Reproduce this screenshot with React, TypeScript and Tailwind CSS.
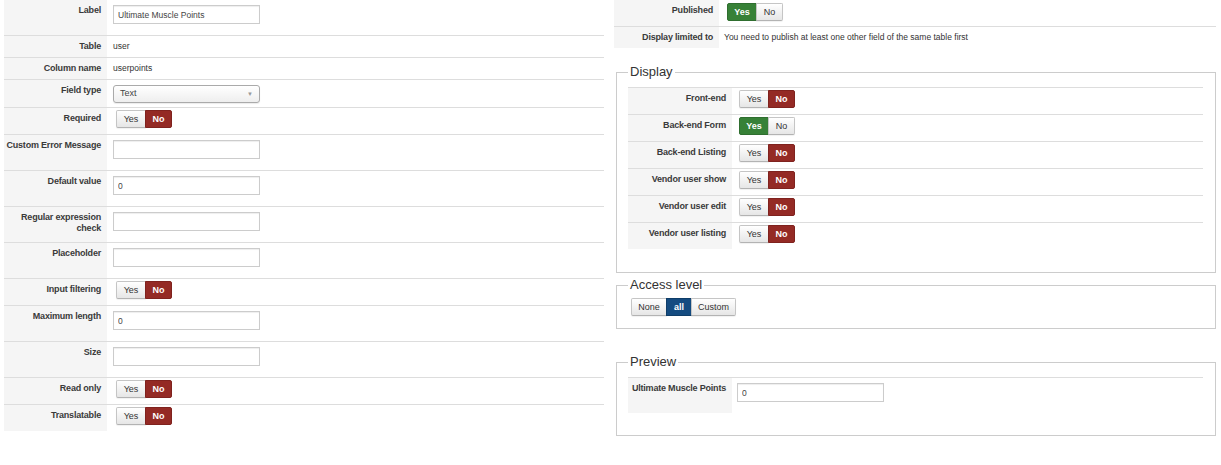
import React from 'react'

type YN = 'yes' | 'no'

const btnBase = 'flex h-[18px] items-center justify-center border text-[9px] leading-none'
const btnIdle =
  'border-[#c5c5c5] border-b-[#b3b3b3] bg-linear-to-b from-white to-[#e6e6e6] text-[#333] shadow-[0_1px_1px_rgba(0,0,0,0.06)]'
const btnRed = 'border-[#7f221e] bg-[#942a25] font-bold text-white'
const btnGreen = 'border-[#2f6e2f] bg-[#378137] font-bold text-white'
const btnBlue = 'border-[#0f3d68] bg-[#144b80] font-bold text-white'

function YesNo({ value, className = '' }: { value: YN; className?: string }) {
  return (
    <div className={`inline-flex ${className}`}>
      <span
        className={`${btnBase} w-[30px] rounded-l-[2px] ${value === 'yes' ? btnGreen : btnIdle}`}
      >
        Yes
      </span>
      <span
        className={`${btnBase} -ml-px w-[27px] rounded-r-[2px] ${value === 'no' ? btnRed : btnIdle}`}
      >
        No
      </span>
    </div>
  )
}

function TextInput({ value = '', width = 'w-[147px]' }: { value?: string; width?: string }) {
  return (
    <input
      readOnly
      value={value}
      className={`block h-[19px] ${width} border border-[#ccc] bg-white px-[4px] text-[8.5px] text-[#444] shadow-[inset_0_1px_1px_rgba(0,0,0,0.07)] outline-none`}
    />
  )
}

function FakeSelect({ value }: { value: string }) {
  return (
    <div className="flex h-[18px] w-[147px] items-center justify-between rounded-[3px] border border-[#aaa] bg-linear-to-b from-white to-[#eee] pl-[6px] pr-[6px] text-[9px] text-[#444] shadow-[0_1px_1px_rgba(0,0,0,0.08)]">
      <span>{value}</span>
      <span className="text-[6px] text-[#999]">▼</span>
    </div>
  )
}

type Kind = 'text' | 'input' | 'toggle' | 'select'

const valuePad: Record<Kind, string> = {
  text: 'pt-[4px] pb-[5px] leading-[12px] text-[8.5px]',
  input: 'pt-[5px] pb-[11px]',
  toggle: 'pt-[2px] pb-[6px]',
  select: 'pt-[5px] pb-[4px]',
}

function Row({
  label,
  kind,
  first = false,
  labelCol = 'grid-cols-[103px_1fr]',
  valueClass = 'pl-[6px]',
  children,
}: {
  label: React.ReactNode
  kind: Kind
  first?: boolean
  labelCol?: string
  valueClass?: string
  children: React.ReactNode
}) {
  return (
    <div className={`grid ${labelCol} ${first ? '' : 'border-t border-[#ddd]'}`}>
      <div className="bg-[#f5f5f5] pr-[6px] pt-[5px] text-right font-bold leading-[11px] tracking-[-0.2px] text-[#3a3a3a]">
        {label}
      </div>
      <div className={`${valueClass} ${valuePad[kind]}`}>{children}</div>
    </div>
  )
}

function Fieldset({
  title,
  className,
  children,
}: {
  title: string
  className: string
  children: React.ReactNode
}) {
  return (
    <fieldset className={`ml-[2px] border border-[#ccc] pl-[11px] pr-[12px] ${className}`}>
      <legend className="px-[2px] text-[13px] leading-[20px] text-[#333]">{title}</legend>
      {children}
    </fieldset>
  )
}

const displayRows: [string, YN][] = [
  ['Front-end', 'no'],
  ['Back-end Form', 'yes'],
  ['Back-end Listing', 'no'],
  ['Vendor user show', 'no'],
  ['Vendor user edit', 'no'],
  ['Vendor user listing', 'no'],
]

export default function App() {
  return (
    <div className="flex h-[465px] w-[1221px] bg-white pl-[4px] font-['Liberation_Sans',Arial,sans-serif] text-[9px] text-[#333]">
      {/* field settings */}
      <div className="w-[600px]">
        <Row label="Label" kind="input" first>
          <TextInput value="Ultimate Muscle Points" />
        </Row>
        <Row label="Table" kind="text">
          user
        </Row>
        <Row label="Column name" kind="text">
          userpoints
        </Row>
        <Row label="Field type" kind="select">
          <FakeSelect value="Text" />
        </Row>
        <Row label="Required" kind="toggle">
          <YesNo value="no" className="ml-[3px]" />
        </Row>
        <Row label="Custom Error Message" kind="input">
          <TextInput />
        </Row>
        <Row label="Default value" kind="input">
          <TextInput value="0" />
        </Row>
        <Row
          label={
            <>
              Regular expression
              <br />
              check
            </>
          }
          kind="input"
        >
          <TextInput />
        </Row>
        <Row label="Placeholder" kind="input">
          <TextInput />
        </Row>
        <Row label="Input filtering" kind="toggle">
          <YesNo value="no" className="ml-[3px]" />
        </Row>
        <Row label="Maximum length" kind="input">
          <TextInput value="0" />
        </Row>
        <Row label="Size" kind="input">
          <TextInput />
        </Row>
        <Row label="Read only" kind="toggle">
          <YesNo value="no" className="ml-[3px]" />
        </Row>
        <Row label="Translatable" kind="toggle">
          <YesNo value="no" className="ml-[3px]" />
        </Row>
      </div>

      {/* publishing + display options */}
      <div className="ml-[10px] w-[602px]">
        <div className="grid grid-cols-[105px_1fr]">
          <div className="bg-[#f5f5f5] pr-[6px] pt-[5px] text-right font-bold leading-[11px] tracking-[-0.2px] text-[#3a3a3a]">
            Published
          </div>
          <div className="pb-[5px] pl-[8px] pt-[3px]">
            <YesNo value="yes" />
          </div>
        </div>
        <Row label="Display limited to" kind="text" labelCol="grid-cols-[105px_1fr]" valueClass="pl-[5px]">
          You need to publish at least one other field of the same table first
        </Row>

        <Fieldset title="Display" className="mt-[14px] pb-[23px] pt-[5px]">
          <div className="border-t border-[#ddd]">
            {displayRows.map(([label, v], i) => (
              <Row
                key={label}
                label={label}
                kind="toggle"
                first={i === 0}
                labelCol="grid-cols-[104px_1fr]"
                valueClass="pl-[5px]"
              >
                <YesNo value={v} className="ml-[2px]" />
              </Row>
            ))}
          </div>
        </Fieldset>

        <Fieldset title="Access level" className="mt-[2px] pb-[12px] pt-[3px]">
          <div className="ml-[3px] inline-flex">
            <span className={`${btnBase} w-[36px] rounded-l-[2px] ${btnIdle}`}>None</span>
            <span className={`${btnBase} -ml-px w-[26px] ${btnBlue}`}>all</span>
            <span className={`${btnBase} -ml-px w-[45px] rounded-r-[2px] ${btnIdle}`}>Custom</span>
          </div>
        </Fieldset>

        <Fieldset title="Preview" className="mt-[23px] pb-[22px] pt-[5px]">
          <div className="border-t border-[#ddd]">
            <Row
              label="Ultimate Muscle Points"
              kind="input"
              first
              labelCol="grid-cols-[104px_1fr]"
              valueClass="pl-[5px]"
            >
              <TextInput value="0" />
            </Row>
          </div>
        </Fieldset>
      </div>
    </div>
  )
}
